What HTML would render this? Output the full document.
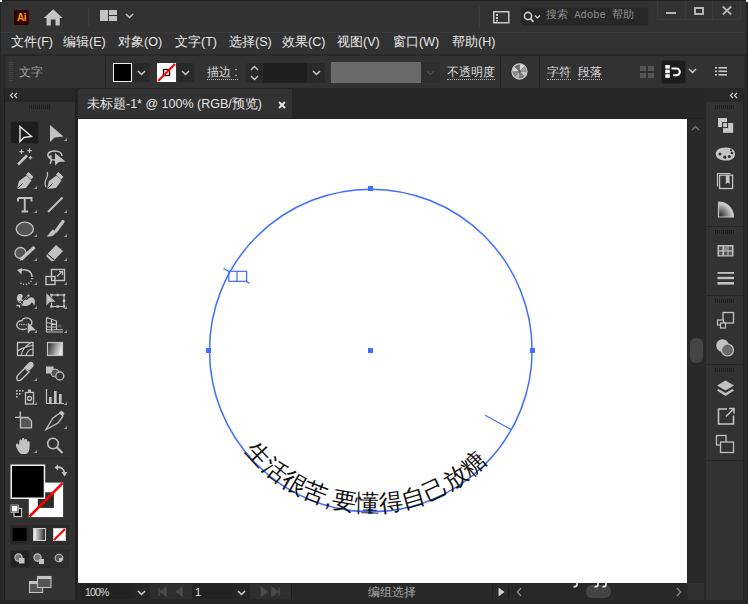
<!DOCTYPE html>
<html><head><meta charset="utf-8">
<style>
*{margin:0;padding:0;box-sizing:border-box}
html,body{width:748px;height:604px;overflow:hidden;background:#2a2a2a;font-family:"Liberation Sans",sans-serif;color:#d6d6d6}
.a{position:absolute}
svg{position:absolute;overflow:visible}
#title{left:0;top:0;width:748px;height:32px;background:#323232}
#menu{left:0;top:32px;width:748px;height:22px;background:#323232;border-top:1px solid #3a3a3a}
.mi{position:absolute;top:3px;font-size:12.5px;color:#e8e8e8;white-space:nowrap;line-height:15px}
#ctrl{left:4px;top:55px;width:741px;height:34px;background:#323232;border:1px solid #262626}
.sep{position:absolute;width:1px;background:#262626}
.dd{position:absolute;background:#292929;border-radius:2px}
.cl{position:absolute;font-size:12px;color:#dcdcdc;white-space:nowrap;line-height:14px}
.ul{border-bottom:1px dotted #bdbdbd}
#tools{left:4px;top:89px;width:71px;height:511px;background:#323232;border-left:1px solid #1f1f1f}
#thead{left:5px;top:89px;width:70px;height:13px;background:#282828}
#tabbar{left:78px;top:89px;width:626px;height:30px;background:#262626;border-bottom:1px solid #1f1f1f}
#tab{left:78px;top:89px;width:214px;height:29px;background:#323232}
#canvas{left:78px;top:119px;width:609px;height:464px;background:#fff}
#vscroll{left:687px;top:119px;width:17px;height:464px;background:#292929;border-left:1px solid #262626}
#status{left:78px;top:583px;width:626px;height:17px;background:#282828}
#rpanel{left:705px;top:89px;width:39px;height:511px;background:#323232;border-left:1px solid #262626;border-right:1px solid #262626}
</style></head><body>
<div id="title" class="a"></div>
<!-- Ai logo -->
<div class="a" style="left:14px;top:10px;width:15px;height:15px;background:#330000;border-radius:2px;color:#ff9a00;font-weight:bold;font-size:10px;line-height:15px;text-align:center;letter-spacing:-0.4px">Ai</div>
<!-- home -->
<svg style="left:0;top:0" width="70" height="30" viewBox="0 0 70 30"><path d="M53.2 9.3 L62.5 18 L59.8 18 L59.8 25.5 L55.5 25.5 L55.5 19.5 L50.8 19.5 L50.8 25.5 L46.5 25.5 L46.5 18 L43.8 18 Z" fill="#c4c4c4"/></svg>
<div class="a" style="left:88px;top:8px;width:1px;height:18px;background:#3c3c3c"></div>
<!-- workspace -->
<svg style="left:100px;top:10px" width="18" height="12" viewBox="0 0 18 12"><rect x="0" y="0" width="8" height="11" fill="#c4c4c4"/><rect x="9" y="0" width="8" height="5" fill="#c4c4c4"/><rect x="9" y="6" width="8" height="5" fill="#c4c4c4"/></svg>
<svg style="left:125px;top:13px" width="9" height="6" viewBox="0 0 9 6"><path d="M1 1 L4.5 4.5 L8 1" stroke="#c4c4c4" stroke-width="1.5" fill="none"/></svg>
<div class="a" style="left:479px;top:6px;width:1px;height:21px;background:#3c3c3c"></div>
<!-- panel icon -->
<svg style="left:493px;top:11px" width="17" height="13" viewBox="0 0 17 13"><rect x="0.75" y="0.75" width="15" height="11" stroke="#c8c8c8" stroke-width="1.5" fill="none"/><rect x="3" y="3" width="2" height="2" fill="#c8c8c8"/><rect x="3" y="6" width="2" height="2" fill="#c8c8c8"/><rect x="3" y="9" width="2" height="1.5" fill="#c8c8c8"/></svg>
<!-- search -->
<div class="a" style="left:520px;top:7px;width:129px;height:19px;background:#272727;border-radius:3px;border:1px solid #2e2e2e"></div>
<svg style="left:523px;top:11px" width="19" height="12" viewBox="0 0 19 12"><circle cx="5" cy="5" r="3.6" stroke="#c8c8c8" stroke-width="1.6" fill="none"/><path d="M7.6 7.6 L10.5 10.8" stroke="#c8c8c8" stroke-width="1.8"/><path d="M12 4.5 L14.5 7 L17 4.5" stroke="#c8c8c8" stroke-width="1.4" fill="none"/></svg>
<div class="a" style="left:546px;top:8px;font-family:'Liberation Mono',monospace;font-size:10.5px;color:#8e8e8e;line-height:15px;top:8px;white-space:nowrap">搜索 Adobe 帮助</div>
<!-- window controls -->
<div class="a" style="left:657px;top:-1px;width:84px;height:21px;border:1px solid #3a3a3a;border-radius:0 0 3px 3px"></div>
<div class="a" style="left:685px;top:0px;width:1px;height:19px;background:#3a3a3a"></div>
<div class="a" style="left:712px;top:0px;width:1px;height:19px;background:#3a3a3a"></div>
<div class="a" style="left:666px;top:12px;width:10px;height:2px;background:#b4b4b4"></div>
<div class="a" style="left:694px;top:7px;width:10px;height:8px;border:2px solid #b4b4b4"></div>
<svg style="left:722px;top:6px" width="10" height="9" viewBox="0 0 10 9"><path d="M0.8 0.5 L9.2 8.5 M9.2 0.5 L0.8 8.5" stroke="#b4b4b4" stroke-width="1.8"/></svg>

<div id="menu" class="a"></div>
<div class="mi" style="left:11px;top:35px">文件(F)</div>
<div class="mi" style="left:63px;top:35px">编辑(E)</div>
<div class="mi" style="left:118px;top:35px">对象(O)</div>
<div class="mi" style="left:175px;top:35px">文字(T)</div>
<div class="mi" style="left:229px;top:35px">选择(S)</div>
<div class="mi" style="left:282px;top:35px">效果(C)</div>
<div class="mi" style="left:337px;top:35px">视图(V)</div>
<div class="mi" style="left:393px;top:35px">窗口(W)</div>
<div class="mi" style="left:452px;top:35px">帮助(H)</div>
<div id="ctrl" class="a"></div>
<svg style="left:9px;top:62px" width="4" height="20" viewBox="0 0 4 20"><path d="M2 0 V20" stroke="#444" stroke-width="4" stroke-dasharray="1 1"/></svg>
<div class="cl" style="left:19px;top:65px;color:#a4a4a4">文字</div>
<div class="sep" style="left:105px;top:57px;height:30px"></div>
<!-- fill swatch -->
<div class="a" style="left:113px;top:63px;width:19px;height:19px;background:#000;border:1.5px solid #f0f0f0"></div>
<div class="dd" style="left:133px;top:63px;width:17px;height:19px"></div>
<svg style="left:137px;top:70px" width="9" height="6" viewBox="0 0 9 6"><path d="M1 1 L4.5 4.5 L8 1" stroke="#c8c8c8" stroke-width="1.5" fill="none"/></svg>
<!-- stroke swatch -->
<svg style="left:157px;top:63px" width="19" height="19" viewBox="0 0 19 19"><rect x="0" y="0" width="19" height="19" fill="#fff"/><rect x="6.5" y="6.5" width="6" height="6" stroke="#000" stroke-width="1.3" fill="none"/><path d="M1 18 L18 1" stroke="#f00" stroke-width="2.2"/></svg>
<div class="dd" style="left:177px;top:63px;width:17px;height:19px"></div>
<svg style="left:181px;top:70px" width="9" height="6" viewBox="0 0 9 6"><path d="M1 1 L4.5 4.5 L8 1" stroke="#c8c8c8" stroke-width="1.5" fill="none"/></svg>
<!-- stroke -->
<div class="cl ul" style="left:207px;top:65px;line-height:14px">描边 :</div>
<div class="dd" style="left:246px;top:63px;width:17px;height:20px"></div>
<svg style="left:250px;top:65px" width="9" height="16" viewBox="0 0 9 16"><path d="M1 5 L4.5 1.5 L8 5 M1 11 L4.5 14.5 L8 11" stroke="#c8c8c8" stroke-width="1.4" fill="none"/></svg>
<div class="a" style="left:263px;top:63px;width:44px;height:20px;background:#1f1f1f"></div>
<div class="dd" style="left:307px;top:63px;width:18px;height:20px"></div>
<svg style="left:312px;top:70px" width="9" height="6" viewBox="0 0 9 6"><path d="M1 1 L4.5 4.5 L8 1" stroke="#c8c8c8" stroke-width="1.5" fill="none"/></svg>
<div class="a" style="left:331px;top:62px;width:90px;height:21px;background:#6a6a6a"></div>
<div class="a" style="left:421px;top:62px;width:19px;height:21px;background:#2e2e2e"></div>
<svg style="left:426px;top:70px" width="9" height="6" viewBox="0 0 9 6"><path d="M1 1 L4.5 4.5 L8 1" stroke="#4a4a4a" stroke-width="1.5" fill="none"/></svg>
<div class="cl ul" style="left:447px;top:65px;line-height:14px">不透明度</div>
<div class="sep" style="left:500px;top:57px;height:30px"></div>
<!-- globe -->
<svg style="left:511px;top:63px" width="17" height="17" viewBox="0 0 17 17"><path d="M8.5 8.5 L8.50 1.20 A7.3 7.3 0 0 1 13.66 3.34 Z" fill="#d8d8d8"/><path d="M8.5 8.5 L13.66 3.34 A7.3 7.3 0 0 1 15.80 8.50 Z" fill="#9a9a9a"/><path d="M8.5 8.5 L15.80 8.50 A7.3 7.3 0 0 1 13.66 13.66 Z" fill="#c4c4c4"/><path d="M8.5 8.5 L13.66 13.66 A7.3 7.3 0 0 1 8.50 15.80 Z" fill="#7a7a7a"/><path d="M8.5 8.5 L8.50 15.80 A7.3 7.3 0 0 1 3.34 13.66 Z" fill="#b0b0b0"/><path d="M8.5 8.5 L3.34 13.66 A7.3 7.3 0 0 1 1.20 8.50 Z" fill="#8a8a8a"/><path d="M8.5 8.5 L1.20 8.50 A7.3 7.3 0 0 1 3.34 3.34 Z" fill="#cfcfcf"/><path d="M8.5 8.5 L3.34 3.34 A7.3 7.3 0 0 1 8.50 1.20 Z" fill="#6e6e6e"/><circle cx="8.5" cy="8.5" r="7.6" fill="none" stroke="#d0d0d0" stroke-width="1.1"/><circle cx="8.5" cy="8.5" r="1.2" fill="#555"/></svg>
<div class="sep" style="left:539px;top:57px;height:30px"></div>
<div class="cl ul" style="left:547px;top:65px;line-height:14px">字符</div>
<div class="cl ul" style="left:578px;top:65px;line-height:14px">段落</div>
<!-- grid icon -->
<svg style="left:640px;top:66px" width="14" height="12" viewBox="0 0 14 12"><rect x="0" y="0" width="6" height="5" fill="#555"/><rect x="8" y="0" width="6" height="5" fill="#555"/><rect x="0" y="7" width="6" height="5" fill="#555"/><rect x="8" y="7" width="6" height="5" fill="#555"/></svg>
<div class="a" style="left:661px;top:60px;width:25px;height:24px;background:#1c1c1c;border-radius:3px;border:1px solid #262626"></div>
<svg style="left:665px;top:65px" width="16" height="14" viewBox="0 0 16 14"><rect x="0.3" y="0" width="4.5" height="3.6" fill="#fff"/><rect x="0.3" y="4.6" width="4.5" height="3.6" fill="#fff"/><rect x="0.3" y="9.2" width="4.5" height="3.6" fill="#fff"/><path d="M6.5 3.6 H11.5 A3.3 3.3 0 0 1 11.5 10.2 H8" stroke="#fff" stroke-width="2" fill="none"/></svg>
<svg style="left:688px;top:68px" width="9" height="6" viewBox="0 0 9 6"><path d="M1 1 L4.5 4.5 L8 1" stroke="#c8c8c8" stroke-width="1.5" fill="none"/></svg>
<svg style="left:715px;top:67px" width="12" height="9" viewBox="0 0 12 9"><rect x="0" y="0" width="2" height="1.6" fill="#c8c8c8"/><rect x="0" y="3.5" width="2" height="1.6" fill="#c8c8c8"/><rect x="0" y="7" width="2" height="1.6" fill="#c8c8c8"/><rect x="3.5" y="0" width="8.5" height="1.6" fill="#c8c8c8"/><rect x="3.5" y="3.5" width="8.5" height="1.6" fill="#c8c8c8"/><rect x="3.5" y="7" width="8.5" height="1.6" fill="#c8c8c8"/></svg>
<div class="a" style="left:75px;top:89px;width:3px;height:511px;background:#222"></div>
<div id="tools" class="a"></div>
<div id="thead" class="a"></div>
<svg style="left:0;top:0" width="78" height="604" viewBox="0 0 78 604">
<path d="M13 93 L10.5 95.5 L13 98 M17 93 L14.5 95.5 L17 98" stroke="#d0d0d0" stroke-width="1.3" fill="none"/>
<path d="M29.5 104.5 V109 M31.5 104.5 V109 M33.5 104.5 V109 M35.5 104.5 V109 M37.5 104.5 V109 M39.5 104.5 V109 M41.5 104.5 V109 M43.5 104.5 V109 M45.5 104.5 V109 M47.5 104.5 V109 M49.5 104.5 V109" stroke="#1e1e1e" stroke-width="1"/>
<!-- row0 -->
<rect x="10.5" y="121.5" width="28" height="22" rx="2" fill="#1d1d1d" stroke="#2c2c2c"/>
<path d="M20 126.5 L20 141.5 L24 137.5 L31.5 136.5 Z" stroke="#e6e6e6" stroke-width="1.4" fill="none" stroke-linejoin="miter"/>
<path d="M50 125 L50 142 L54.5 137.5 L63.5 136.5 Z" fill="#c2c2c2"/>
<g fill="#9a9a9a">
<path d="M67 138 L67 141 L64 141 Z"/>
<path d="M37 186 L37 189 L34 189 Z"/>
<path d="M37 210 L37 213 L34 213 Z"/>
<path d="M67 210 L67 213 L64 213 Z"/>
<path d="M37 234 L37 237 L34 237 Z"/>
<path d="M67 234 L67 237 L64 237 Z"/>
<path d="M37 258 L37 261 L34 261 Z"/>
<path d="M67 258 L67 261 L64 261 Z"/>
<path d="M37 282 L37 285 L34 285 Z"/>
<path d="M67 282 L67 285 L64 285 Z"/>
<path d="M37 306 L37 309 L34 309 Z"/>
<path d="M67 306 L67 309 L64 309 Z"/>
<path d="M37 330 L37 333 L34 333 Z"/>
<path d="M67 330 L67 333 L64 333 Z"/>
<path d="M37 378 L37 381 L34 381 Z"/>
<path d="M37 402 L37 405 L34 405 Z"/>
<path d="M67 402 L67 405 L64 405 Z"/>
<path d="M67 426 L67 429 L64 429 Z"/>
<path d="M37 450 L37 453 L34 453 Z"/>
</g>
<g stroke="#c2c2c2" fill="none" stroke-width="1.5">
<!-- magic wand -->
<path d="M18 164.5 L27 155.5" stroke-width="2.6"/>
<path d="M21.5 149.5 V154 M19.3 151.7 H23.7 M29.5 148.5 V153 M27.3 150.7 H31.7 M30.5 156 V159.5 M28.8 157.7 H32.2" stroke-width="1.2"/>
<!-- lasso -->
<path d="M55 160 C48 160 46 154 50 152 C54 150 62 151 62 156 M50 157 C52 159 51 162 50 164"/>
<circle cx="50.5" cy="156.5" r="1.3" fill="#c2c2c2" stroke="none"/>
<path d="M55 153 L55 165.5 L59 162 L65.5 161.5 Z" fill="#c2c2c2" stroke="none"/>
<!-- pen -->
<path d="M17 189 L19 181 L26.5 175.5 L31.5 180.5 L26 188 Z" fill="#c2c2c2" stroke="none"/>
<path d="M26 174.5 L28.5 172 L33.5 177 L31 179.5 Z" fill="#c2c2c2" stroke="none"/>
<path d="M17.5 188.5 L22.5 183.5" stroke="#323232" stroke-width="1"/>
<!-- curvature pen -->
<path d="M47 189 L49 181 L56.5 175.5 L61.5 180.5 L56 188 Z" fill="#c2c2c2" stroke="none"/>
<path d="M56 174.5 L58.5 172 L63.5 177 L61 179.5 Z" fill="#c2c2c2" stroke="none"/>
<path d="M47.5 188.5 L52.5 183.5" stroke="#323232" stroke-width="1"/>
<path d="M46 187 C42 180 50 178 47 172" stroke-width="1.2"/>
<!-- type -->
<path d="M18 198 H31.5 V201.5 M18 198 V201.5 M24.75 198 V211.5 M21.5 211.5 H28" stroke-width="1.9"/>
<!-- line -->
<path d="M48 212 L62.5 197.5" stroke-width="2"/>
<!-- ellipse -->
<ellipse cx="24.8" cy="229" rx="8.6" ry="6.8" fill="#555" stroke="#c2c2c2" stroke-width="1.3"/>
<!-- brush -->
<path d="M63 221.5 L56 231" stroke-width="3.2" stroke-linecap="round"/>
<path d="M53 229.5 C50 231 49 235 46.5 236.5 C51 237 55 235.5 56 232 Z" fill="#c2c2c2" stroke="none"/>
<!-- shaper -->
<circle cx="20.5" cy="253" r="5.5" fill="#555" stroke="#c2c2c2" stroke-width="1.3"/>
<path d="M21 259.5 L34.5 247" stroke-width="3.2"/>
<path d="M19.5 261 L21.5 257 L23.5 259 Z" fill="#c2c2c2" stroke="none"/>
<!-- eraser -->
<path d="M47.5 254 L56 245 L63 251 L54.5 260 Z" fill="#c2c2c2" stroke="none"/>
<path d="M47.5 254 L51 257 L54.5 260" stroke="#323232" stroke-width="1"/>
<path d="M46.8 254 L54.5 261 L51.5 261.3 L46.5 256.5 Z" fill="#c2c2c2" stroke="none"/>
<!-- rotate -->
<path d="M19.5 271.5 C23 268.5 32 269.5 32 277" stroke-width="1.5"/>
<path d="M32 278 C31.5 284 25 286 20 283" stroke-width="1.5" stroke-dasharray="1.2 1.6"/>
<path d="M17 270 L22 268 L21.5 274.5 Z" fill="#c2c2c2" stroke="none"/>
<!-- scale -->
<rect x="46" y="276.5" width="9" height="8" stroke-width="1.4"/>
<rect x="51.5" y="269.5" width="13" height="11" stroke-width="1.4"/>
<path d="M57 276.5 L62 271.5 M59 271.5 H62.5 V275" stroke-width="1.2"/>
<!-- puppet warp -->
<path d="M18.5 302 C16 299.5 16.5 295 19.5 294 C22 293.5 23.5 295.5 22.5 297.5 L21.5 299 C23.5 301 27 300.5 29 298 C30.5 296.5 33.5 297 34.5 299.5 C35.3 301.5 35 304 34 305.5 C33.5 303.5 32.5 302 31.5 302.5 C30.5 304.5 28.5 306 25 306 C22.5 306 20.5 305 19.5 304 Z" fill="#c2c2c2" stroke="none"/>
<path d="M16.5 305.5 H19.5 V307.5 M20.5 303.5 L28 296" stroke="#c2c2c2" stroke-width="1.3"/>
<path d="M19.5 304.5 L27 297" stroke="#323232" stroke-width="1"/>
<circle cx="20.8" cy="302.8" r="1.8" stroke="#323232" stroke-width="0.9"/>
<circle cx="28.3" cy="295.6" r="1.5" fill="#c2c2c2" stroke="#323232" stroke-width="0.8"/>
<!-- free transform -->
<rect x="51.5" y="295" width="12.5" height="11.5" stroke-width="1.1"/>
<g fill="#c2c2c2" stroke="none"><rect x="50.3" y="293.8" width="2.4" height="2.4"/><rect x="62.8" y="293.8" width="2.4" height="2.4"/><rect x="50.3" y="305.3" width="2.4" height="2.4"/><rect x="62.8" y="305.3" width="2.4" height="2.4"/><rect x="56.5" y="293.8" width="2.4" height="2.4"/><rect x="56.5" y="305.3" width="2.4" height="2.4"/><rect x="62.8" y="299.6" width="2.4" height="2.4"/></g>
<path d="M46 292.5 L46 306.5 L49.8 302.3 L56 302 Z" fill="#c2c2c2" stroke="#323232" stroke-width="0.8"/>
<!-- shape builder -->
<path d="M27 328.5 C24 330 19 330 17.3 327 C15.5 323.5 18.5 320.5 22 320.5 C23 317.5 28 317 30.5 319.5 C32.5 321.5 32 324 30.5 325.5" stroke-width="1.3"/>
<path d="M19 324.5 H26.5" stroke-width="1.3" stroke-dasharray="1.1 1.1"/>
<path d="M27.8 322.5 L27.8 333.5 L30.8 330.5 L36 330.2 Z" fill="#c2c2c2" stroke="none"/>
<!-- perspective -->
<path d="M46.5 317.5 V332 M46.5 317.5 C50 318.5 53 319.5 56.5 321 V330 M51.5 318.8 V331 M46.5 322.5 C50 323 53 323.5 56.5 324.5 M46.5 327 H56.5" stroke-width="1.2"/>
<path d="M46.5 329.8 H63 M46.5 332 H63" stroke-width="1.1"/>
<path d="M56.5 327.5 L59.5 323.8 L62.5 327.5 Z" fill="#555" stroke="none"/>
<!-- mesh -->
<rect x="17.5" y="342.5" width="15.5" height="13" stroke-width="1.3"/>
<path d="M17.5 351 C23 347 27 347 33 345 M21 355.5 C22 350 25 346 31 342.5 M26 355.5 C27 352 29 349 33 349" stroke-width="1.1"/>
<!-- gradient -->
</g>
<defs><linearGradient id="gr" x1="0" y1="0" x2="1" y2="0.3"><stop offset="0" stop-color="#222"/><stop offset="1" stop-color="#e8e8e8"/></linearGradient></defs>
<rect x="47.5" y="342.5" width="15" height="13" fill="url(#gr)" stroke="#c2c2c2" stroke-width="1.2"/>
<g stroke="#c2c2c2" fill="none" stroke-width="1.5">
<!-- eyedropper -->
<path d="M17.5 380 C16 378 17 376 18.5 374.5 L25 368 L29 372 L22.5 378.5 C21 380 19 381.5 17.5 380 Z" stroke-width="1.4"/>
<path d="M24 367.5 L29 362.5 C31 361 33 362 33.5 364 C34 365.5 33 367 32 368 L29.5 370.5 Z" fill="#c2c2c2" stroke="none"/>
<!-- blend -->
<rect x="46" y="366.5" width="7.5" height="7" fill="#c2c2c2" stroke="none"/>
<circle cx="55" cy="373" r="4" fill="#555" stroke="#c2c2c2" stroke-width="1"/>
<circle cx="59.8" cy="376" r="4" fill="#323232" stroke="#c2c2c2" stroke-width="1.3"/>
<!-- symbol sprayer -->
<g fill="#c2c2c2" stroke="none"><rect x="16" y="390" width="1.6" height="1.6"/><rect x="19" y="390" width="1.6" height="1.6"/><rect x="22" y="390" width="1.6" height="1.6"/><rect x="16" y="393" width="1.6" height="1.6"/><rect x="19" y="393" width="1.6" height="1.6"/><rect x="16" y="396" width="1.6" height="1.6"/><rect x="28" y="389.5" width="3" height="2.5"/></g>
<rect x="25.5" y="392.5" width="8" height="11.5" stroke-width="1.3"/>
<circle cx="29.5" cy="398.5" r="2" stroke-width="1.3"/>
<!-- column graph -->
<path d="M46.5 389 V403.5 H64" stroke-width="1.2"/>
<g fill="#c2c2c2" stroke="none"><rect x="49" y="397" width="2.6" height="6.5"/><rect x="54" y="391" width="2.6" height="12.5"/><rect x="59" y="394" width="2.6" height="9.5"/></g>
<!-- artboard -->
<path d="M20.3 411.5 V418 M15 417.3 H21" stroke-width="1.3"/>
<path d="M20.5 417.5 H28 L31.5 421 V427.8 H20.5 Z" fill="#555" stroke-width="1.3"/>
<!-- slice/knife -->
<path d="M46 429.5 L53 418 L60 413 L63 416 L58 423 Z" stroke-width="1.3"/>
<path d="M59 412.5 L61.5 410.5 L64.5 413.5 L62.5 416 Z" fill="#c2c2c2" stroke="none"/>
<!-- hand -->
<path d="M19 452 C17 449 15.5 446 16 444.5 C16.5 443 18 443.5 19 445 L19.5 440.5 C19.5 439 21.5 439 21.7 440.5 L22 439 C22 437.5 24.2 437.5 24.3 439 L24.7 440 C24.9 438.7 27 438.7 27.1 440.2 L27.5 442 C27.7 440.8 29.7 440.9 29.7 442.3 L29.5 448 C29.3 451 28 453.5 26 454 L21 454 Z" fill="#c2c2c2" stroke="none"/>
<!-- zoom -->
<circle cx="53" cy="443.5" r="5.3" stroke-width="1.6"/>
<path d="M56.8 447.3 L62.5 453" stroke-width="2"/>
</g>
<!-- separator -->
<path d="M9 458.5 H70" stroke="#2a2a2a" stroke-width="1"/>
<!-- fill stroke -->
<rect x="28.8" y="482.6" width="34.3" height="34.5" fill="#fff"/>
<rect x="37.8" y="492.3" width="16.1" height="15.6" fill="#2b2b2b"/>
<path d="M29.5 516.5 L62.6 483.2" stroke="#ff0000" stroke-width="2.6"/>
<rect x="11.25" y="465.25" width="33.2" height="33" fill="#000" stroke="#f2f2f2" stroke-width="1.5"/>
<path d="M56.5 467.5 C61 466.5 64 469 64.5 473" stroke="#c2c2c2" stroke-width="1.8" fill="none"/>
<path d="M61.5 472 L64.5 476.5 L67.5 472 Z M58 464.5 L54.5 467.5 L58 470.5 Z" fill="#c2c2c2"/>
<rect x="14" y="508.5" width="7.5" height="8" fill="#000" stroke="#c8c8c8" stroke-width="1.2"/>
<rect x="11.5" y="505.5" width="6.5" height="6.5" fill="#fff" stroke="#000" stroke-width="0.8"/>
<rect x="11" y="505" width="7.5" height="7.5" fill="none" stroke="#c8c8c8" stroke-width="0.8"/>
<!-- color mode row -->
<rect x="10.5" y="525.5" width="58" height="19" fill="#2d2d2d" stroke="#2a2a2a"/>
<rect x="11.5" y="526.5" width="17" height="17" fill="#262626"/>
<rect x="12.5" y="528" width="14" height="13" fill="#000"/>
<defs><linearGradient id="gr2" x1="0" y1="0" x2="1" y2="0"><stop offset="0" stop-color="#fff"/><stop offset="1" stop-color="#222"/></linearGradient></defs>
<rect x="33.5" y="528.5" width="12" height="12" fill="url(#gr2)" stroke="#d0d0d0" stroke-width="1"/>
<rect x="53.5" y="528.5" width="12" height="12" fill="#fff" stroke="#d0d0d0" stroke-width="1"/>
<path d="M54 540 L65 529" stroke="#f00" stroke-width="2.2"/>
<!-- draw modes -->
<rect x="10.5" y="550.5" width="58" height="17" fill="#2d2d2d" stroke="#2a2a2a"/>
<rect x="11" y="551" width="18" height="16" fill="#222"/>
<path d="M30 551 V567 M49 551 V567" stroke="#2a2a2a"/>
<circle cx="18.5" cy="557.5" r="3.6" fill="#777" stroke="#c2c2c2" stroke-width="1.1"/>
<rect x="19" y="558" width="5.5" height="5.5" fill="#c2c2c2"/>
<circle cx="37.5" cy="557.5" r="3.6" fill="#777" stroke="#c2c2c2" stroke-width="1.1"/>
<rect x="39" y="559" width="5" height="5" fill="#c2c2c2"/>
<circle cx="59" cy="558" r="3.8" fill="#555" stroke="#c2c2c2" stroke-width="1.1"/>
<path d="M59 558 H62.8 A3.8 3.8 0 0 1 59 561.8 Z" fill="#c2c2c2"/>
<!-- screen mode -->
<rect x="29.5" y="581.5" width="13" height="11" fill="#555" stroke="#c2c2c2" stroke-width="1.1"/>
<path d="M30 583 H42" stroke="#c2c2c2" stroke-width="2"/>
<rect x="37.5" y="576.5" width="13.5" height="11" fill="#555" stroke="#c2c2c2" stroke-width="1.1"/>
<path d="M38 578 H51" stroke="#c2c2c2" stroke-width="2"/>
</svg>
<div id="tabbar" class="a"></div>
<div id="tab" class="a"></div>
<div class="a" style="left:87px;top:97px;font-size:12.5px;line-height:15px;color:#e4e4e4;white-space:nowrap">未标题-1* @ 100% (RGB/预览)</div>
<svg style="left:278px;top:101px" width="8" height="8" viewBox="0 0 8 8"><path d="M1 1 L7 7 M7 1 L1 7" stroke="#e8e8e8" stroke-width="1.9"/></svg>
<div id="canvas" class="a"></div>
<div id="vscroll" class="a"></div>
<svg style="left:691px;top:125px" width="9" height="6" viewBox="0 0 9 6"><path d="M1 5 L4.5 1.5 L8 5" stroke="#777" stroke-width="1.4" fill="none"/></svg>
<div class="a" style="left:690px;top:338px;width:13px;height:25px;background:#454545;border-radius:6px"></div>
<!-- status bar -->
<div id="status" class="a"></div>
<div class="a" style="left:80px;top:584px;width:52px;height:15px;background:#232323"></div>
<div class="a" style="left:85px;top:585px;font-size:10.5px;line-height:14px;color:#dedede;letter-spacing:-0.8px">100%</div>
<div class="a" style="left:132px;top:584px;width:18px;height:15px;background:#262626"></div>
<svg style="left:137px;top:590px" width="9" height="6" viewBox="0 0 9 6"><path d="M1 1 L4.5 4.5 L8 1" stroke="#d0d0d0" stroke-width="1.5" fill="none"/></svg>
<div class="a" style="left:150px;top:584px;width:42px;height:15px;background:#2e2e2e"></div>
<svg style="left:158px;top:587px" width="30" height="10" viewBox="0 0 30 10"><path d="M1 0.5 V9 M8 0.5 L2.5 4.75 L8 9 Z M24 0.5 L18.5 4.75 L24 9 Z" stroke="#4a4a4a" fill="#4a4a4a" stroke-width="1.4"/></svg>
<div class="a" style="left:192px;top:584px;width:40px;height:15px;background:#232323"></div>
<div class="a" style="left:195px;top:585px;font-size:11px;line-height:14px;color:#dedede">1</div>
<div class="a" style="left:232px;top:584px;width:18px;height:15px;background:#262626"></div>
<svg style="left:237px;top:590px" width="9" height="6" viewBox="0 0 9 6"><path d="M1 1 L4.5 4.5 L8 1" stroke="#d0d0d0" stroke-width="1.5" fill="none"/></svg>
<div class="a" style="left:250px;top:584px;width:41px;height:15px;background:#2e2e2e"></div>
<svg style="left:260px;top:587px" width="30" height="10" viewBox="0 0 30 10"><path d="M1.5 0.5 L7 4.75 L1.5 9 Z M12 0.5 L17.5 4.75 L12 9 Z M19 0.5 V9" stroke="#4a4a4a" fill="#4a4a4a" stroke-width="1.4"/></svg>
<div class="a" style="left:291px;top:584px;width:1px;height:15px;background:#1f1f1f"></div>
<div class="a" style="left:368px;top:585px;font-size:11.5px;line-height:14px;color:#a8a8a8;white-space:nowrap">编组选择</div>
<div class="a" style="left:492px;top:584px;width:1px;height:15px;background:#1f1f1f"></div>
<svg style="left:498px;top:587px" width="7" height="10" viewBox="0 0 7 10"><path d="M0.5 0.5 L6.5 5 L0.5 9.5 Z" fill="#d0d0d0"/></svg>
<div class="a" style="left:508px;top:584px;width:1px;height:15px;background:#1f1f1f"></div>
<svg style="left:516px;top:587px" width="6" height="10" viewBox="0 0 6 10"><path d="M5 1 L1.5 5 L5 9" stroke="#8a8a8a" stroke-width="1.3" fill="none"/></svg>
<div class="a" style="left:586px;top:585px;width:25px;height:13px;background:#444;border-radius:6px"></div>
<svg style="left:676px;top:587px" width="6" height="10" viewBox="0 0 6 10"><path d="M1 1 L4.5 5 L1 9" stroke="#8a8a8a" stroke-width="1.3" fill="none"/></svg>
<div class="a" style="left:687px;top:583px;width:17px;height:17px;background:#303030"></div>
<!-- right panel -->
<div id="rpanel" class="a"></div>
<div class="a" style="left:706px;top:89px;width:37px;height:13px;background:#282828"></div>
<svg style="left:705px;top:89px" width="43" height="515" viewBox="705 89 43 515">
<path d="M733 93 L730.5 95.5 L733 98 M737 93 L734.5 95.5 L737 98" stroke="#d0d0d0" stroke-width="1.3" fill="none"/>
<g stroke="#1e1e1e" stroke-width="1">
<path d="M715.5 105 V109 M717.5 105 V109 M719.5 105 V109 M721.5 105 V109 M723.5 105 V109 M725.5 105 V109 M727.5 105 V109 M729.5 105 V109 M731.5 105 V109 M733.5 105 V109"/>
<path d="M715.5 230 V234 M717.5 230 V234 M719.5 230 V234 M721.5 230 V234 M723.5 230 V234 M725.5 230 V234 M727.5 230 V234 M729.5 230 V234 M731.5 230 V234 M733.5 230 V234"/>
<path d="M715.5 299 V303 M717.5 299 V303 M719.5 299 V303 M721.5 299 V303 M723.5 299 V303 M725.5 299 V303 M727.5 299 V303 M729.5 299 V303 M731.5 299 V303 M733.5 299 V303"/>
<path d="M715.5 368 V372 M717.5 368 V372 M719.5 368 V372 M721.5 368 V372 M723.5 368 V372 M725.5 368 V372 M727.5 368 V372 M729.5 368 V372 M731.5 368 V372 M733.5 368 V372"/>
</g>
<path d="M706 226.5 H743 M706 295.5 H743 M706 364.5 H743 M706 460.5 H743" stroke="#262626" stroke-width="1.2"/>
<!-- arrange -->
<rect x="718" y="118" width="9" height="9" fill="#c8c8c8"/>
<rect x="723" y="123" width="10.2" height="9.8" fill="#c8c8c8"/>
<rect x="722.6" y="122.6" width="5" height="5" fill="#c8c8c8" stroke="#2a2a2a" stroke-width="1"/>
<!-- palette -->
<path d="M716 155.5 C714.5 151 719 147.5 726 147.5 C732 147.5 735.5 150.5 735 154.5 C734.5 158.5 731 160.5 726 160.5 C721 160.5 717 159 716 155.5 Z" fill="#c4c4c4"/>
<g fill="#323232"><circle cx="720" cy="154" r="1.5"/><circle cx="724.8" cy="157.2" r="1.6"/><circle cx="729.3" cy="156.5" r="1.5"/><circle cx="732" cy="153" r="1.3"/><circle cx="731" cy="150.3" r="1.1"/></g>
<!-- libraries -->
<path d="M717.5 186.5 V173.5 H730.5" fill="none" stroke="#c4c4c4" stroke-width="1.2"/>
<rect x="719.6" y="175.2" width="13" height="13.3" fill="none" stroke="#c4c4c4" stroke-width="1.3"/>
<path d="M725.8 175.5 V184.3 L727.7 182.6 L729.6 184.3 V175.5 Z" fill="#c4c4c4"/>
<!-- gradient panel -->
<defs><radialGradient id="rg" cx="0" cy="1" r="1.1"><stop offset="0" stop-color="#111"/><stop offset="1" stop-color="#eee"/></radialGradient></defs>
<path d="M718.5 217 V202 C727 202 733.5 208.5 733.5 217 Z" fill="url(#rg)" stroke="#c2c2c2" stroke-width="1.2"/>
<!-- swatches -->
<rect x="717.5" y="245" width="16" height="11.5" fill="#c2c2c2"/>
<g fill="#555"><rect x="719" y="246.5" width="3.5" height="3.8"/><rect x="724" y="246.5" width="3.5" height="3.8"/><rect x="728.5" y="246.5" width="3.5" height="3.8"/><rect x="719" y="251.5" width="3.5" height="3.8"/><rect x="724" y="251.5" width="3.5" height="3.8"/><rect x="728.5" y="251.5" width="3.5" height="3.8"/></g>
<rect x="724" y="246.5" width="3.5" height="3.8" fill="#888"/>
<!-- align lines -->
<g fill="#c2c2c2"><rect x="717.5" y="272" width="16.5" height="1.8"/><rect x="717.5" y="276.8" width="16.5" height="2.4"/><rect x="717.5" y="282" width="16.5" height="2.6"/></g>
<!-- transform -->
<rect x="723" y="312.5" width="10.5" height="10.5" fill="none" stroke="#c2c2c2" stroke-width="1.3"/>
<rect x="717.5" y="320" width="6" height="5" fill="#323232" stroke="#c2c2c2" stroke-width="1.2"/>
<rect x="720.5" y="323" width="5" height="5" fill="#323232" stroke="#c2c2c2" stroke-width="1.2"/>
<!-- opacity -->
<circle cx="722.5" cy="345.5" r="6.3" fill="#c2c2c2"/>
<circle cx="727.5" cy="350" r="6" fill="#6a6a6a" stroke="#c2c2c2" stroke-width="1.2"/>
<!-- layers -->
<path d="M725.5 380.5 L734 385.5 L725.5 390.5 L717 385.5 Z" fill="#c2c2c2"/>
<path d="M718.5 389 L725.5 393 L732.5 389 L734 390.5 L725.5 396 L717 390.5 Z" fill="#c2c2c2"/>
<!-- export -->
<path d="M727 409 H718.5 V424 H733.5 V415.5" fill="none" stroke="#c2c2c2" stroke-width="1.6"/>
<path d="M726 416.5 L733.5 409 M729 408.5 H734 V413.5" fill="none" stroke="#c2c2c2" stroke-width="1.5"/>
<!-- artboards -->
<rect x="716.5" y="435.5" width="9.5" height="9.5" fill="none" stroke="#c2c2c2" stroke-width="1.3"/>
<rect x="720.5" y="442" width="13" height="10.5" fill="#323232" stroke="#c2c2c2" stroke-width="1.3"/>
</svg>
<svg style="left:0;top:0" width="748" height="604" viewBox="0 0 748 604">
<defs><path id="cp" d="M209.5 350.5 A161.3 161.3 0 0 0 532.1 350.5"/></defs>
<circle cx="370.8" cy="350.5" r="161.3" fill="none" stroke="#3f6fff" stroke-width="1.5"/>
<g fill="#3f6fff">
<rect x="368" y="186" width="5" height="5"/>
<rect x="206" y="348" width="5" height="5"/>
<rect x="530" y="348" width="5" height="5"/>
<rect x="368" y="348" width="5" height="5"/>
<rect x="368" y="509" width="5" height="5"/>
</g>
<text font-family="Liberation Sans, sans-serif" font-size="24" font-weight="300" letter-spacing="0.5" fill="#111"><textPath href="#cp" startOffset="108">生活很苦,要懂得自己放糖</textPath></text>
<g stroke="#3f6fff" stroke-width="1.2" fill="none">
<path d="M223.5 268.5 L229 271.5"/>
<rect x="228.8" y="271.3" width="17.8" height="10"/>
<path d="M237 271.3 V281.3"/>
<path d="M246.6 281.3 L249.5 283.5"/>
<path d="M485.2 415.2 L511.7 429.8"/>
</g>
</svg>
<div class="a" style="left:0;top:0;width:748px;height:1px;background:#222"></div>
<div class="a" style="left:0;top:0;width:1px;height:604px;background:#262626"></div>
<div class="a" style="left:746px;top:0;width:2px;height:604px;background:#242424"></div>
<div class="a" style="left:0;top:600px;width:748px;height:4px;background:#242424"></div>
<div class="a" style="left:0;top:0;width:2px;height:2px;background:#eee"></div>
<div class="a" style="left:746px;top:0;width:2px;height:2px;background:#eee"></div>
<svg style="left:0;top:0" width="748" height="604" viewBox="0 0 748 604"><path d="M577 582 V584.5 C577 586.5 575 587 573.5 586.5 M598 582 V584.5 C598 586.5 596 587 594.5 586.5 M606 582 V584.5 C606 586.5 604 587 602.5 586.5" stroke="#e8e8e8" stroke-width="1.8" fill="none"/></svg>
</body></html>
